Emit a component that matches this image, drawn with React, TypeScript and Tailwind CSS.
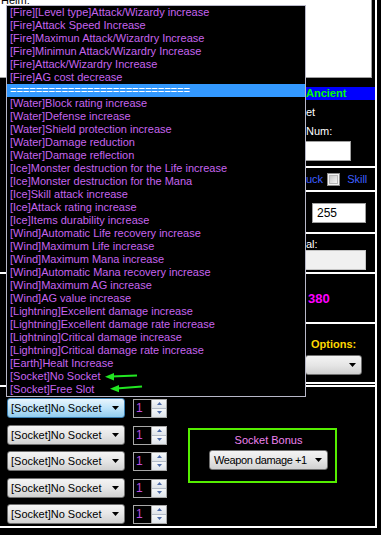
import clsx from 'clsx'

const options: string[] = [
  '[Fire][Level type]Attack/Wizardy increase',
  '[Fire]Attack Speed Increase',
  '[Fire]Maximun Attack/Wizardry Increase',
  '[Fire]Minimun Attack/Wizardry Increase',
  '[Fire]Attack/Wizardry Increase',
  '[Fire]AG cost decrease',
  '============================',
  '[Water]Block rating increase',
  '[Water]Defense increase',
  '[Water]Shield protection increase',
  '[Water]Damage reduction',
  '[Water]Damage reflection',
  '[Ice]Monster destruction for the Life increase',
  '[Ice]Monster destruction for the Mana',
  '[Ice]Skill attack increase',
  '[Ice]Attack rating increase',
  '[Ice]Items durability increase',
  '[Wind]Automatic Life recovery increase',
  '[Wind]Maximum Life increase',
  '[Wind]Maximum Mana increase',
  '[Wind]Automatic Mana recovery increase',
  '[Wind]Maximum AG increase',
  '[Wind]AG value increase',
  '[Lightning]Excellent damage increase',
  '[Lightning]Excellent damage rate increase',
  '[Lightning]Critical damage increase',
  '[Lightning]Critical damage rate increase',
  '[Earth]Healt Increase',
  '[Socket]No Socket',
  '[Socket]Free Slot',
]

const rowGaps = ['mt-0', 'mt-[7px]', 'mt-[6px]', 'mt-[7px]', 'mt-[6px]']

function DownArrow() {
  return (
    <svg width="7" height="4" viewBox="0 0 7 4" className="shrink-0">
      <polygon points="0,0 7,0 3.5,4" fill="#000" />
    </svg>
  )
}

interface ComboProps {
  label?:     string
  focused?:   boolean
  className?: string
}

function Combo({ label, focused, className }: ComboProps) {
  return (
    <div
      className={clsx(
        'flex h-[20px] items-center justify-between rounded-[3px] border pl-[3px] pr-[5px] text-black',
        focused
          ? 'border-[#3c7fb1] bg-linear-to-b from-[#e8f5fd] via-[#bfe4f9] to-[#92cdef]'
          : 'border-[#707070] bg-linear-to-b from-[#f4f4f4] via-[#e6e6e6] to-[#d0d0d0]',
        className,
      )}
    >
      <span className="whitespace-nowrap">{label}</span>
      <DownArrow />
    </div>
  )
}

function Spin() {
  return (
    <div className="ml-[8px] flex h-[19px]">
      <div className="w-[19px] border border-[#a8a8a8] bg-black pl-[2px] text-[12px] leading-[17px] text-[#c050e0]">
        1
      </div>
      <div className="flex w-[15px] flex-col border border-l-0 border-[#a8a8a8]">
        <div className="flex flex-1 items-center justify-center border-b border-[#b4bcc8] bg-linear-to-b from-[#f6f8fa] to-[#dfe4ea]">
          <svg width="5" height="3" viewBox="0 0 5 3">
            <polygon points="0,3 5,3 2.5,0" fill="#4f6ca8" />
          </svg>
        </div>
        <div className="flex flex-1 items-center justify-center bg-linear-to-b from-[#f6f8fa] to-[#dfe4ea]">
          <svg width="5" height="3" viewBox="0 0 5 3">
            <polygon points="0,0 5,0 2.5,3" fill="#4f6ca8" />
          </svg>
        </div>
      </div>
    </div>
  )
}

export default function App() {
  return (
    <div className="relative h-[535px] w-[381px] overflow-hidden bg-black font-['Liberation_Sans',Arial,sans-serif] text-[11px] leading-[13px]">
      <div className="flex h-[528px] w-[377px] flex-col border-r-2 border-b-2 border-white">
        {/* Caixa branca do topo */}
        <div className="h-[78px] w-[372px] shrink-0 border-r border-b border-[#a0a0a0] bg-white pl-[1px]">
          <div className="-mt-[6px] text-black">Helm:</div>
        </div>

        {/* Meio */}
        <div className="flex h-[307px] shrink-0">
          <div className="flex w-[305px] flex-col">
            <div className="mt-[194px] h-[2px] bg-white" />
          </div>

          <div className="flex w-[70px] flex-col">
            <div className="mt-[9px] h-[13px] bg-[#0000ff] pl-[1px] font-bold text-[#00ff00]">Ancient</div>
            <div className="mt-[6px] h-[13px] pl-[1px] text-white">et</div>
            <div className="mt-[6px] h-[13px] pl-[1px] text-white">Num:</div>
            <div className="mt-[3px] h-[20px] w-[46px] border border-[#a0a0a0] bg-white" />
            <div className="mt-[5px] h-[2px] bg-white" />
            <div className="flex h-[22px] items-center pl-[1px] text-[#3f5fff]">
              <span>uck</span>
              <span className="ml-[4px] flex h-[13px] w-[13px] items-center justify-center border border-[#8a8a8a] bg-[#f4f4f4]">
                <span className="h-[9px] w-[9px] border border-[#b8b8b8] bg-linear-to-br from-[#c8c8c8] to-[#f6f6f6]" />
              </span>
              <span className="ml-[7px]">Skill</span>
            </div>
            <div className="h-[2px] bg-white" />
            <div className="ml-[7px] mt-[11px] flex h-[20px] w-[54px] items-center border border-[#a0a0a0] bg-white pl-[4px] text-[12px] text-black">
              255
            </div>
            <div className="mt-[9px] h-[2px] bg-white" />
            <div className="mt-[4px] h-[12px] pl-[1px] leading-[12px] text-white">al:</div>
            <div className="h-[20px] w-[61px] border border-[#c4c4c4] bg-[#f0f0f0]" />
            <div className="mt-[2px] h-[2px] bg-white" />
            <div className="flex h-[48px] items-center pl-[3px] text-[13px] font-bold text-[#ff00ff]">380</div>
            <div className="h-[2px] bg-white" />
            <div className="mt-[14px] h-[13px] pl-[6px] font-bold whitespace-nowrap text-[#ffd700]">Options:</div>
            <Combo className="mt-[4px] w-[57px]" />
            <div className="mt-[7px] h-[2px] bg-white" />
          </div>
        </div>

        {/* Sockets */}
        <div className="flex flex-1 border-t-2 border-white">
          <div className="flex flex-col pl-[7px] pt-[11px]">
            {rowGaps.map((gap, i) => (
              <div key={i} className={clsx('flex items-center', gap)}>
                <Combo label="[Socket]No Socket" focused={i === 0} className="w-[118px]" />
                <Spin />
              </div>
            ))}
          </div>

          <div className="ml-[21px] mt-[41px] h-[55px] w-[149px] border-2 border-[#55ee00]">
            <div className="ml-[19px] flex w-[119px] flex-col items-center">
              <div className="mt-[4px] h-[13px] text-[#ee82ee]">Socket Bonus</div>
              <Combo label="Weapon damage +1" className="mt-[3px] w-[119px] pl-[4px] tracking-[-0.4px]" />
            </div>
          </div>
        </div>
      </div>

      {/* Lista aberta */}
      <div className="absolute left-[6px] top-[5px] w-[300px] border border-[#b8b8c8] bg-black">
        {options.map((opt, i) => (
          <div
            key={i}
            className={clsx(
              'h-[13px] overflow-hidden whitespace-nowrap pl-[3px]',
              i === 6 ? 'bg-[#3399ff] text-white' : 'text-[#c664ee]',
            )}
          >
            {opt}
          </div>
        ))}

        <svg className="absolute left-[93px] top-[362px]" width="44" height="26" viewBox="0 0 44 26">
          <line x1="11" y1="8.6" x2="37" y2="7.6" stroke="#22e622" strokeWidth="2" />
          <polygon points="5,8.8 14,5 14,12.4" fill="#22e622" />
          <line x1="16" y1="20.5" x2="42" y2="18.6" stroke="#22e622" strokeWidth="2" />
          <polygon points="10,20.8 19,16.9 19,24.3" fill="#22e622" />
        </svg>
      </div>
    </div>
  )
}
